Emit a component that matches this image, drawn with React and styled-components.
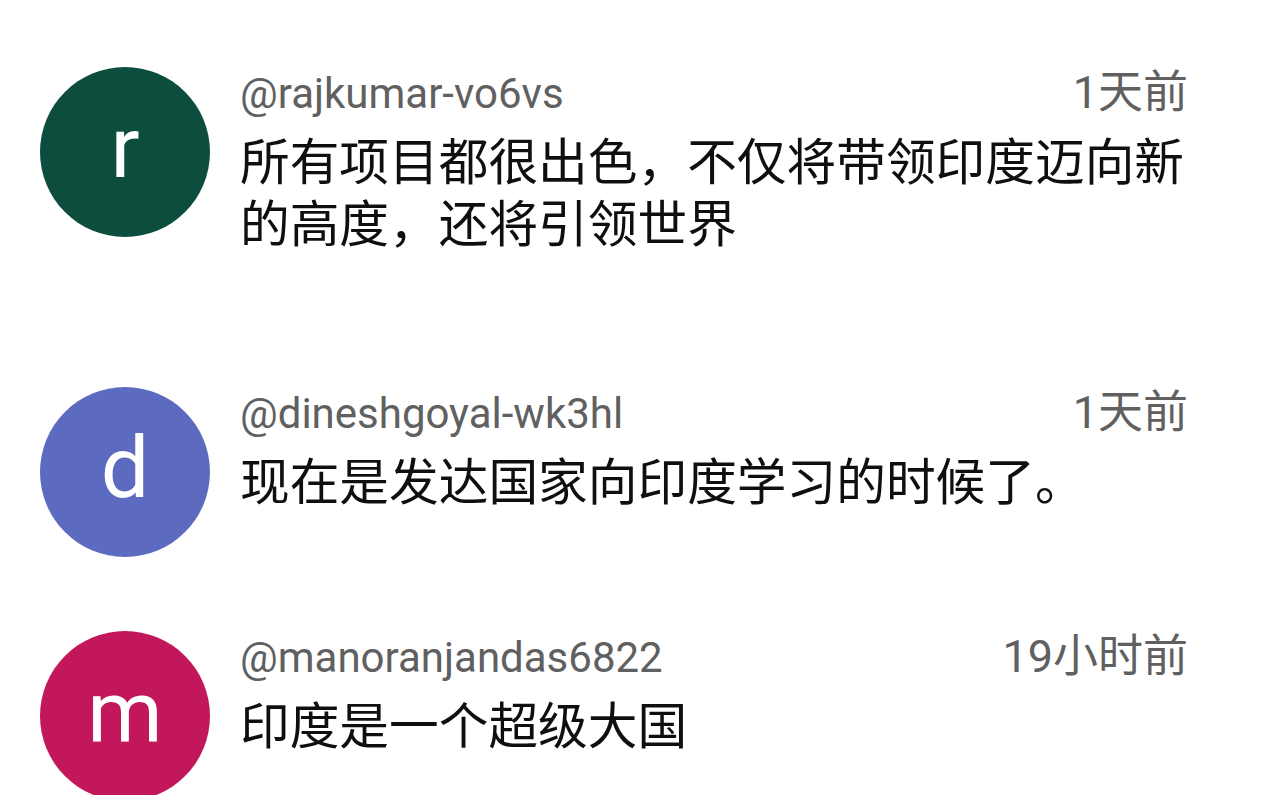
import React from 'react';
import styled, { createGlobalStyle } from 'styled-components';

const GlobalStyle = createGlobalStyle`
    html, body {
        margin: 0;
        padding: 0;
        background: #ffffff;
    }
    body {
        width: 1276px;
        height: 795px;
        overflow: hidden;
        font-family: Roboto, "Noto Sans CJK SC", sans-serif;
    }
`

const List = styled.div`
    display: flex;
    flex-direction: column;
    padding: 67px 88px 0 40px;
`

const Row = styled.div`
    display: grid;
    grid-template-columns: 170px 1fr;
    column-gap: 30px;
    align-items: start;
    min-height: ${({ $height }) => $height}px;
`

const Avatar = styled.div`
    width: 170px;
    height: 170px;
    border-radius: 50%;
    background-color: ${({ $color }) => $color};
    color: #ffffff;
    display: flex;
    align-items: center;
    justify-content: center;
    font-family: Roboto, sans-serif;
    font-size: 86px;
    line-height: 1;
    padding-bottom: 8px;
    box-sizing: border-box;
`

const Body = styled.div`
    display: flex;
    flex-direction: column;
`

const Head = styled.div`
    display: flex;
    justify-content: space-between;
    align-items: baseline;
    height: 52px;
    margin-bottom: 8px;
    color: #606060;
    line-height: 52px;
`

const Name = styled.span`
    font-family: Roboto, sans-serif;
    font-size: 42px;
`

const Time = styled.span`
    font-family: Roboto, "Noto Sans CJK SC", sans-serif;
    font-size: 45px;
`

const Text = styled.p`
    margin: 0;
    color: #0f0f0f;
    font-family: "Noto Sans CJK SC", sans-serif;
    font-size: 49.7px;
    line-height: 62px;
`

const comments = [
    {
        letter: 'r',
        color: '#0c4d3e',
        name: '@rajkumar-vo6vs',
        time: '1天前',
        text: '所有项目都很出色，不仅将带领印度迈向新的高度，还将引领世界',
        height: 320,
    },
    {
        letter: 'd',
        color: '#5c6bc0',
        name: '@dineshgoyal-wk3hl',
        time: '1天前',
        text: '现在是发达国家向印度学习的时候了。',
        height: 244,
    },
    {
        letter: 'm',
        color: '#c2185b',
        name: '@manoranjandas6822',
        time: '19小时前',
        text: '印度是一个超级大国',
        height: 244,
    },
];

export default function App() {
    return (
        <>
            <GlobalStyle />
            <List>
                {comments.map((c) => (
                    <Row key={c.name} $height={c.height}>
                        <Avatar $color={c.color}>{c.letter}</Avatar>
                        <Body>
                            <Head>
                                <Name>{c.name}</Name>
                                <Time>{c.time}</Time>
                            </Head>
                            <Text>{c.text}</Text>
                        </Body>
                    </Row>
                ))}
            </List>
        </>
    )
}
